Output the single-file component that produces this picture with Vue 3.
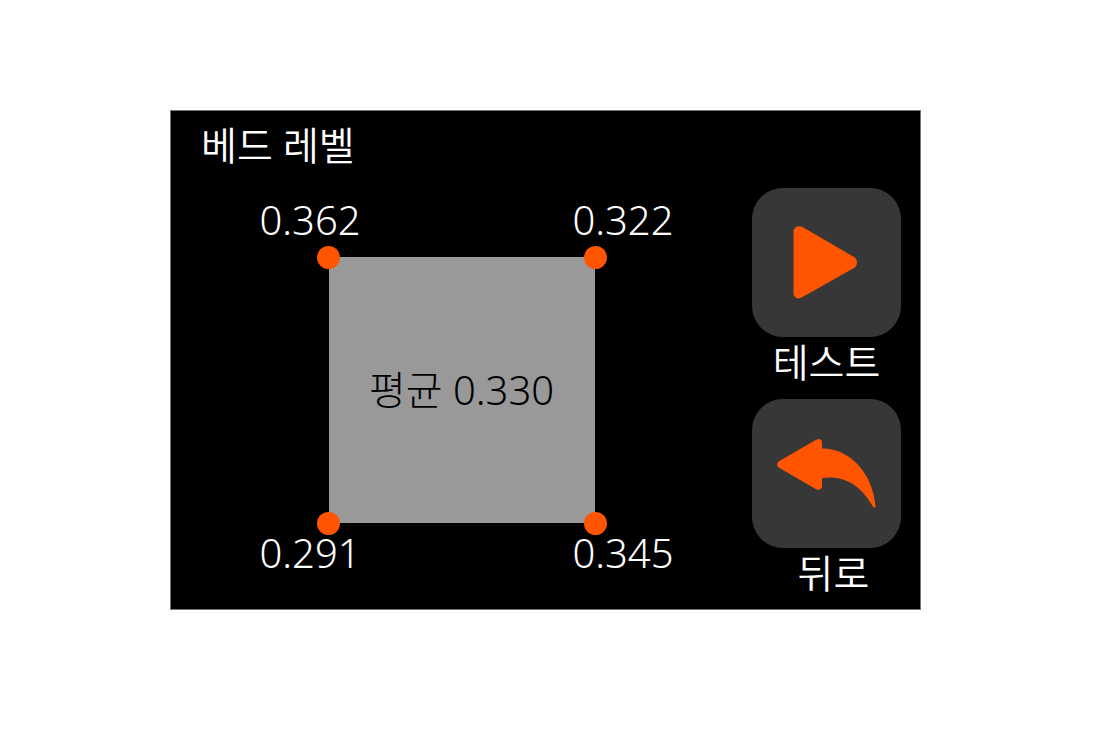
<script setup>
const rear = [
  { id: 'rear-left', value: '0.362' },
  { id: 'rear-right', value: '0.322' },
]
const front = [
  { id: 'front-left', value: '0.291' },
  { id: 'front-right', value: '0.345' },
]
const average = '0.330'
</script>

<template>
  <main class="page">
    <section class="panel">
      <h1 class="title">베드 레벨</h1>
      <div class="content">
        <div class="map">
          <div class="readings">
            <span v-for="p in rear" :key="p.id">{{ p.value }}</span>
          </div>
          <div class="bed">
            <i class="dot top left"></i>
            <i class="dot top right"></i>
            <i class="dot bottom left"></i>
            <i class="dot bottom right"></i>
            <span>평균 {{ average }}</span>
          </div>
          <div class="readings">
            <span v-for="p in front" :key="p.id">{{ p.value }}</span>
          </div>
        </div>
        <div class="actions">
          <div class="action">
            <button id="test" type="button" aria-labelledby="test-label">
              <svg viewBox="0 0 149 149" aria-hidden="true">
                <path d="M41.500 44C41.500 39 46.500 37 50.500 39L102 69Q105 71 105 74.500Q105 78 102 80L50.500 109C46.500 112 41.500 110 41.500 105Z" />
              </svg>
            </button>
            <label id="test-label" for="test">테스트</label>
          </div>
          <div class="action back">
            <button id="back" type="button" aria-labelledby="back-label">
              <svg viewBox="0 0 149 149" aria-hidden="true">
                <path d="M64.500 40.500C67.500 39 70 41 70 43V49.500C98 49 121 75 123.500 107Q123.500 109.500 121.500 108.500C108 84 90 76 70 79V87C70 90 67.500 91.500 64.500 90.500L27.500 69Q25 67.500 25 65.500Q25 63.500 27.500 62Z" />
              </svg>
            </button>
            <label id="back-label" for="back">뒤로</label>
          </div>
        </div>
      </div>
    </section>
  </main>
</template>

<style>
body {
  margin: 0;
  background: #fff;
}
</style>

<style scoped>
.page {
  box-sizing: border-box;
  padding: 110px 198px 136px 170px;
  font-family: "Noto Sans", "Noto Sans CJK KR", sans-serif;
  font-size: 40px;
  font-weight: 350;
  line-height: 48px;
}

.panel {
  box-sizing: border-box;
  min-height: 500px;
  padding: 10px 19px 8px 30px;
  border: 1px solid #777;
  background: #000;
  color: #fff;
}

.title {
  margin: 0;
  font-size: 39px;
  font-weight: 350;
}

.content {
  display: flex;
  margin-top: 19px;
}

.map {
  flex: 1;
  display: flex;
  flex-direction: column;
  align-items: center;
  margin-left: -30px;
  padding-top: 8px;
}

.readings {
  box-sizing: border-box;
  display: flex;
  justify-content: space-between;
  width: 424px;
  padding-left: 10px;
}

.bed {
  position: relative;
  display: flex;
  align-items: center;
  justify-content: center;
  width: 266px;
  height: 266px;
  margin: 13px 0 6px;
  background: #999;
  color: #000;
  font-weight: 300;
}

.dot {
  position: absolute;
  width: 23px;
  height: 23px;
  border-radius: 50%;
  background: #ff5500;
}

.top {
  top: -11px;
}

.bottom {
  bottom: -12px;
}

.left {
  left: -12px;
}

.right {
  right: -12px;
}

.actions {
  display: flex;
  flex-direction: column;
  gap: 12px;
}

.action {
  display: flex;
  flex-direction: column;
  align-items: center;
  font-size: 39px;
  line-height: 50px;
}

.back label {
  padding-left: 14px;
}

.action button {
  width: 149px;
  height: 149px;
  padding: 0;
  border: 0;
  border-radius: 31px;
  background: #373737;
  cursor: pointer;
}

.action svg {
  display: block;
  width: 100%;
  height: 100%;
  fill: #ff5500;
}
</style>
